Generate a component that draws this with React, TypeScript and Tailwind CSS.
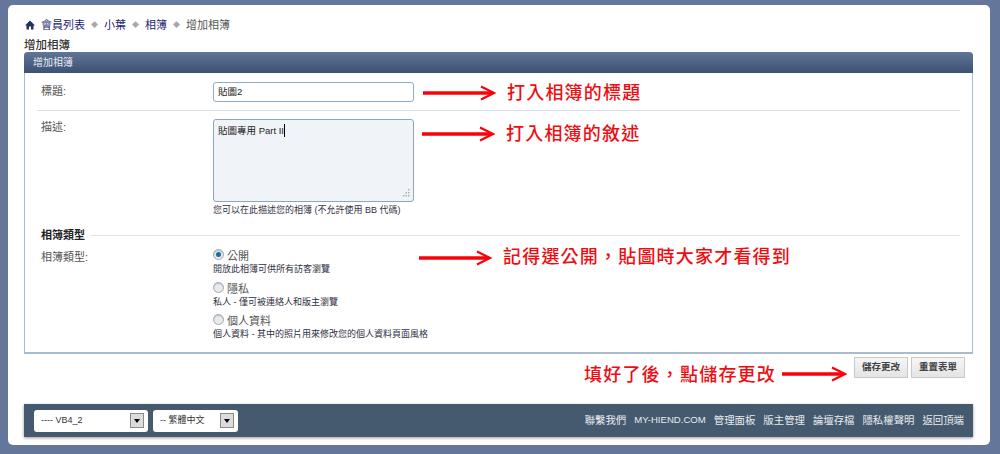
const cjk = "font-['Liberation_Sans','Noto_Sans_CJK_TC',sans-serif]"

function Arrow({ width }: { width: number }) {
  return (
    <svg width={width} height="16" viewBox={`0 0 ${width} 16`} fill="none">
      <path d={`M0 8H${width - 3}`} stroke="#fb0007" strokeWidth="3.5" />
      <path d={`M${width - 15} 1.5L${width - 2} 8L${width - 15} 14.5`} stroke="#fb0007" strokeWidth="2.2" />
    </svg>
  )
}

function Note({ text, width, className, lift }: { text: string; width: number; className: string; lift: string }) {
  return (
    <div className={`absolute flex items-center font-['Noto_Sans_CJK_TC',sans-serif] text-[18px] leading-6 font-medium text-[#f00d12] ${className}`}>
      <Arrow width={width} />
      <span className={`relative ml-[11px] tracking-[1.2px] ${lift}`}>{text}</span>
    </div>
  )
}

function Radio({ checked }: { checked?: boolean }) {
  return (
    <span className="relative -top-[2px] flex h-[11px] w-[11px] shrink-0 items-center justify-center rounded-full border border-[#a3a9b0] bg-[#e8ebee] shadow-[inset_0_1px_1px_#b8bec4]">
      {checked && <span className="h-[5px] w-[5px] rounded-full bg-[#1a6d9c]" />}
    </span>
  )
}

function RadioOption({ label, hint, checked }: { label: string; hint: string; checked?: boolean }) {
  return (
    <div>
      <div className="flex h-[13px] items-center gap-[3px] text-[11px] leading-[13px] text-[#555]">
        <Radio checked={checked} />
        <span>{label}</span>
      </div>
      <p className="text-[9px] leading-[13px] text-[#2f2f45]">{hint}</p>
    </div>
  )
}

function SelectBox({ label, className }: { label: string; className: string }) {
  return (
    <div className={`flex h-[22px] items-center justify-between rounded-[3px] bg-white pr-[4px] pl-[7px] text-[9px] text-[#333] ${className}`}>
      <span>{label}</span>
      <span className="flex h-[15px] w-[14px] items-center justify-center border border-[#8b8b8b] bg-[#dcdcdc]">
        <span className="h-0 w-0 border-x-[3.5px] border-t-[4px] border-x-transparent border-t-black" />
      </span>
    </div>
  )
}

const footerLinks = ['聯繫我們', 'MY-HIEND.COM', '管理面板', '版主管理', '論壇存檔', '隱私權聲明', '返回頂端']

export default function App() {
  return (
    <div lang="zh-Hant" className={`${cjk} h-[454px] w-[1000px] overflow-hidden bg-[#64779a] pt-[5px] pl-2`}>
      <div className="relative h-[440px] w-[982px] rounded-[5px] bg-white pt-[12px] pl-4">
        {/* breadcrumb */}
        <div className="flex h-[16px] items-center text-[11px] text-[#1c1c6e]">
          <svg width="10" height="10" viewBox="0 0 10 10" className="mr-[6px] ml-[1px]">
            <path d="M5 0.5L0 5.5H1.5V9.5H4V6.5H6V9.5H8.5V5.5H10Z" fill="#22325a" />
          </svg>
          <span>會員列表</span>
          <span className="mx-[6px] text-[7px] text-[#a8a8a8]">◆</span>
          <span>小葉</span>
          <span className="mx-[6px] text-[7px] text-[#a8a8a8]">◆</span>
          <span>相簿</span>
          <span className="mx-[6px] text-[7px] text-[#a8a8a8]">◆</span>
          <span className="text-[#555]">增加相簿</span>
        </div>
        <h1 className="mt-[6px] h-[13px] text-[11.5px] leading-[13px] font-medium text-[#333]">增加相簿</h1>

        {/* form panel */}
        <div className="h-[302px] w-[949px] rounded-t-[4px] border border-t-0 border-b-2 border-[#a9bccd]">
          <div className="-mx-px flex h-[21px] items-center rounded-t-[4px] bg-gradient-to-b from-[#5f7697] to-[#3d5173] pl-[9px] text-[10px] text-[#e8ecf2]">
            增加相簿
          </div>
          <div className="px-3">
            <div className="flex h-[38px] items-end border-b border-[#d8e2ea] pb-[8px]">
              <label className="w-[176px] self-start pt-[10px] pl-1 text-[11px] text-[#555]">標題:</label>
              <div className="flex h-[20px] w-[201px] items-center rounded-[3px] border border-[#8fadc4] pl-[4px] text-[9.5px] text-[#222]">
                貼圖2
              </div>
            </div>
            <div className="flex pt-[8px]">
              <label className="w-[176px] pl-1 text-[11px] text-[#555]">描述:</label>
              <div>
                <div className="relative flex h-[83px] w-[201px] items-start rounded-[3px] border border-[#8fa5b8] bg-[#f0f4f8] pt-[4px] pl-[4px] text-[9.5px] leading-[13px] text-[#222]">
                  <span>貼圖專用 Part II</span>
                  <span className="h-[13px] w-px bg-black" />
                  <svg width="9" height="9" viewBox="0 0 9 9" className="absolute right-[3px] bottom-[3px]">
                    <path d="M7 0h1.5v1.5H7zM4.500 3H6v1.500H4.500zM7 3h1.500v1.500H7zM2 6h1.500v1.500H2zM4.500 6H6v1.500H4.500zM7 6h1.500v1.500H7z" fill="#a8b2bc" />
                  </svg>
                </div>
                <p className="mt-[2px] text-[9px] leading-[13px] text-[#2f2f45]">您可以在此描述您的相簿 (不允許使用 BB 代碼)</p>
              </div>
            </div>
            <div className="mt-[11px] flex h-[14px] items-center">
              <span className="bg-white pr-[5px] pl-1 text-[11px] font-bold text-[#222]">相簿類型</span>
              <span className="h-px flex-1 bg-[#dde5ec]" />
            </div>
            <div className="mt-[8px] flex">
              <label className="w-[176px] pl-1 text-[11px] leading-[15px] text-[#555]">相簿類型:</label>
              <div className="flex flex-col gap-[6.5px]">
                <RadioOption checked label="公開" hint="開放此相簿可供所有訪客瀏覽" />
                <RadioOption label="隱私" hint="私人 - 僅可被連絡人和版主瀏覽" />
                <RadioOption label="個人資料" hint="個人資料 - 其中的照片用來修改您的個人資料頁面風格" />
              </div>
            </div>
          </div>
        </div>

        {/* action buttons */}
        <div className="mt-[3px] flex w-[941px] justify-end gap-[3px]">
          <button type="button" className="h-[21px] w-[54px] border border-[#c9c9c9] bg-gradient-to-b from-[#f6f6f6] to-[#e4e4e4] text-[9.5px] font-bold text-[#444]">儲存更改</button>
          <button type="button" className="h-[21px] w-[54px] border border-[#c9c9c9] bg-gradient-to-b from-[#f6f6f6] to-[#e4e4e4] text-[9.5px] font-bold text-[#444]">重置表單</button>
        </div>

        {/* footer bar */}
        <div className="mt-[26px] flex h-[33px] w-[949px] items-center justify-between bg-[#465a6f] pr-[9px] pl-[10px] shadow-[0_1px_3px_#9a9a9a]">
          <div className="flex gap-[5px]">
            <SelectBox label="---- VB4_2" className="w-[114px]" />
            <SelectBox label="-- 繁體中文" className="w-[85px]" />
          </div>
          <div className="flex gap-[8px] text-[10.4px] text-[#e6eaee]">
            {footerLinks.map((link) => (
              <span key={link} className={link === 'MY-HIEND.COM' ? 'text-[9.6px]' : ''}>{link}</span>
            ))}
          </div>
        </div>

        {/* red annotations drawn over the form */}
        <Note text="打入相簿的標題" width={73} className="top-[76px] left-[415px]" lift="-top-[2px]" />
        <Note text="打入相簿的敘述" width={73} className="top-[117px] left-[414px]" lift="-top-[2px]" />
        <Note text="記得選公開，貼圖時大家才看得到" width={73} className="top-[241px] left-[411px]" lift="-top-[3px]" />
        <div className="absolute top-[357px] left-[576px] flex items-center font-['Noto_Sans_CJK_TC',sans-serif] text-[18px] leading-6 font-medium tracking-[1.2px] text-[#f00d12]">
          <span className="relative -top-[1px] mr-[6px]">填好了後，點儲存更改</span>
          <Arrow width={65} />
        </div>
      </div>
    </div>
  )
}
